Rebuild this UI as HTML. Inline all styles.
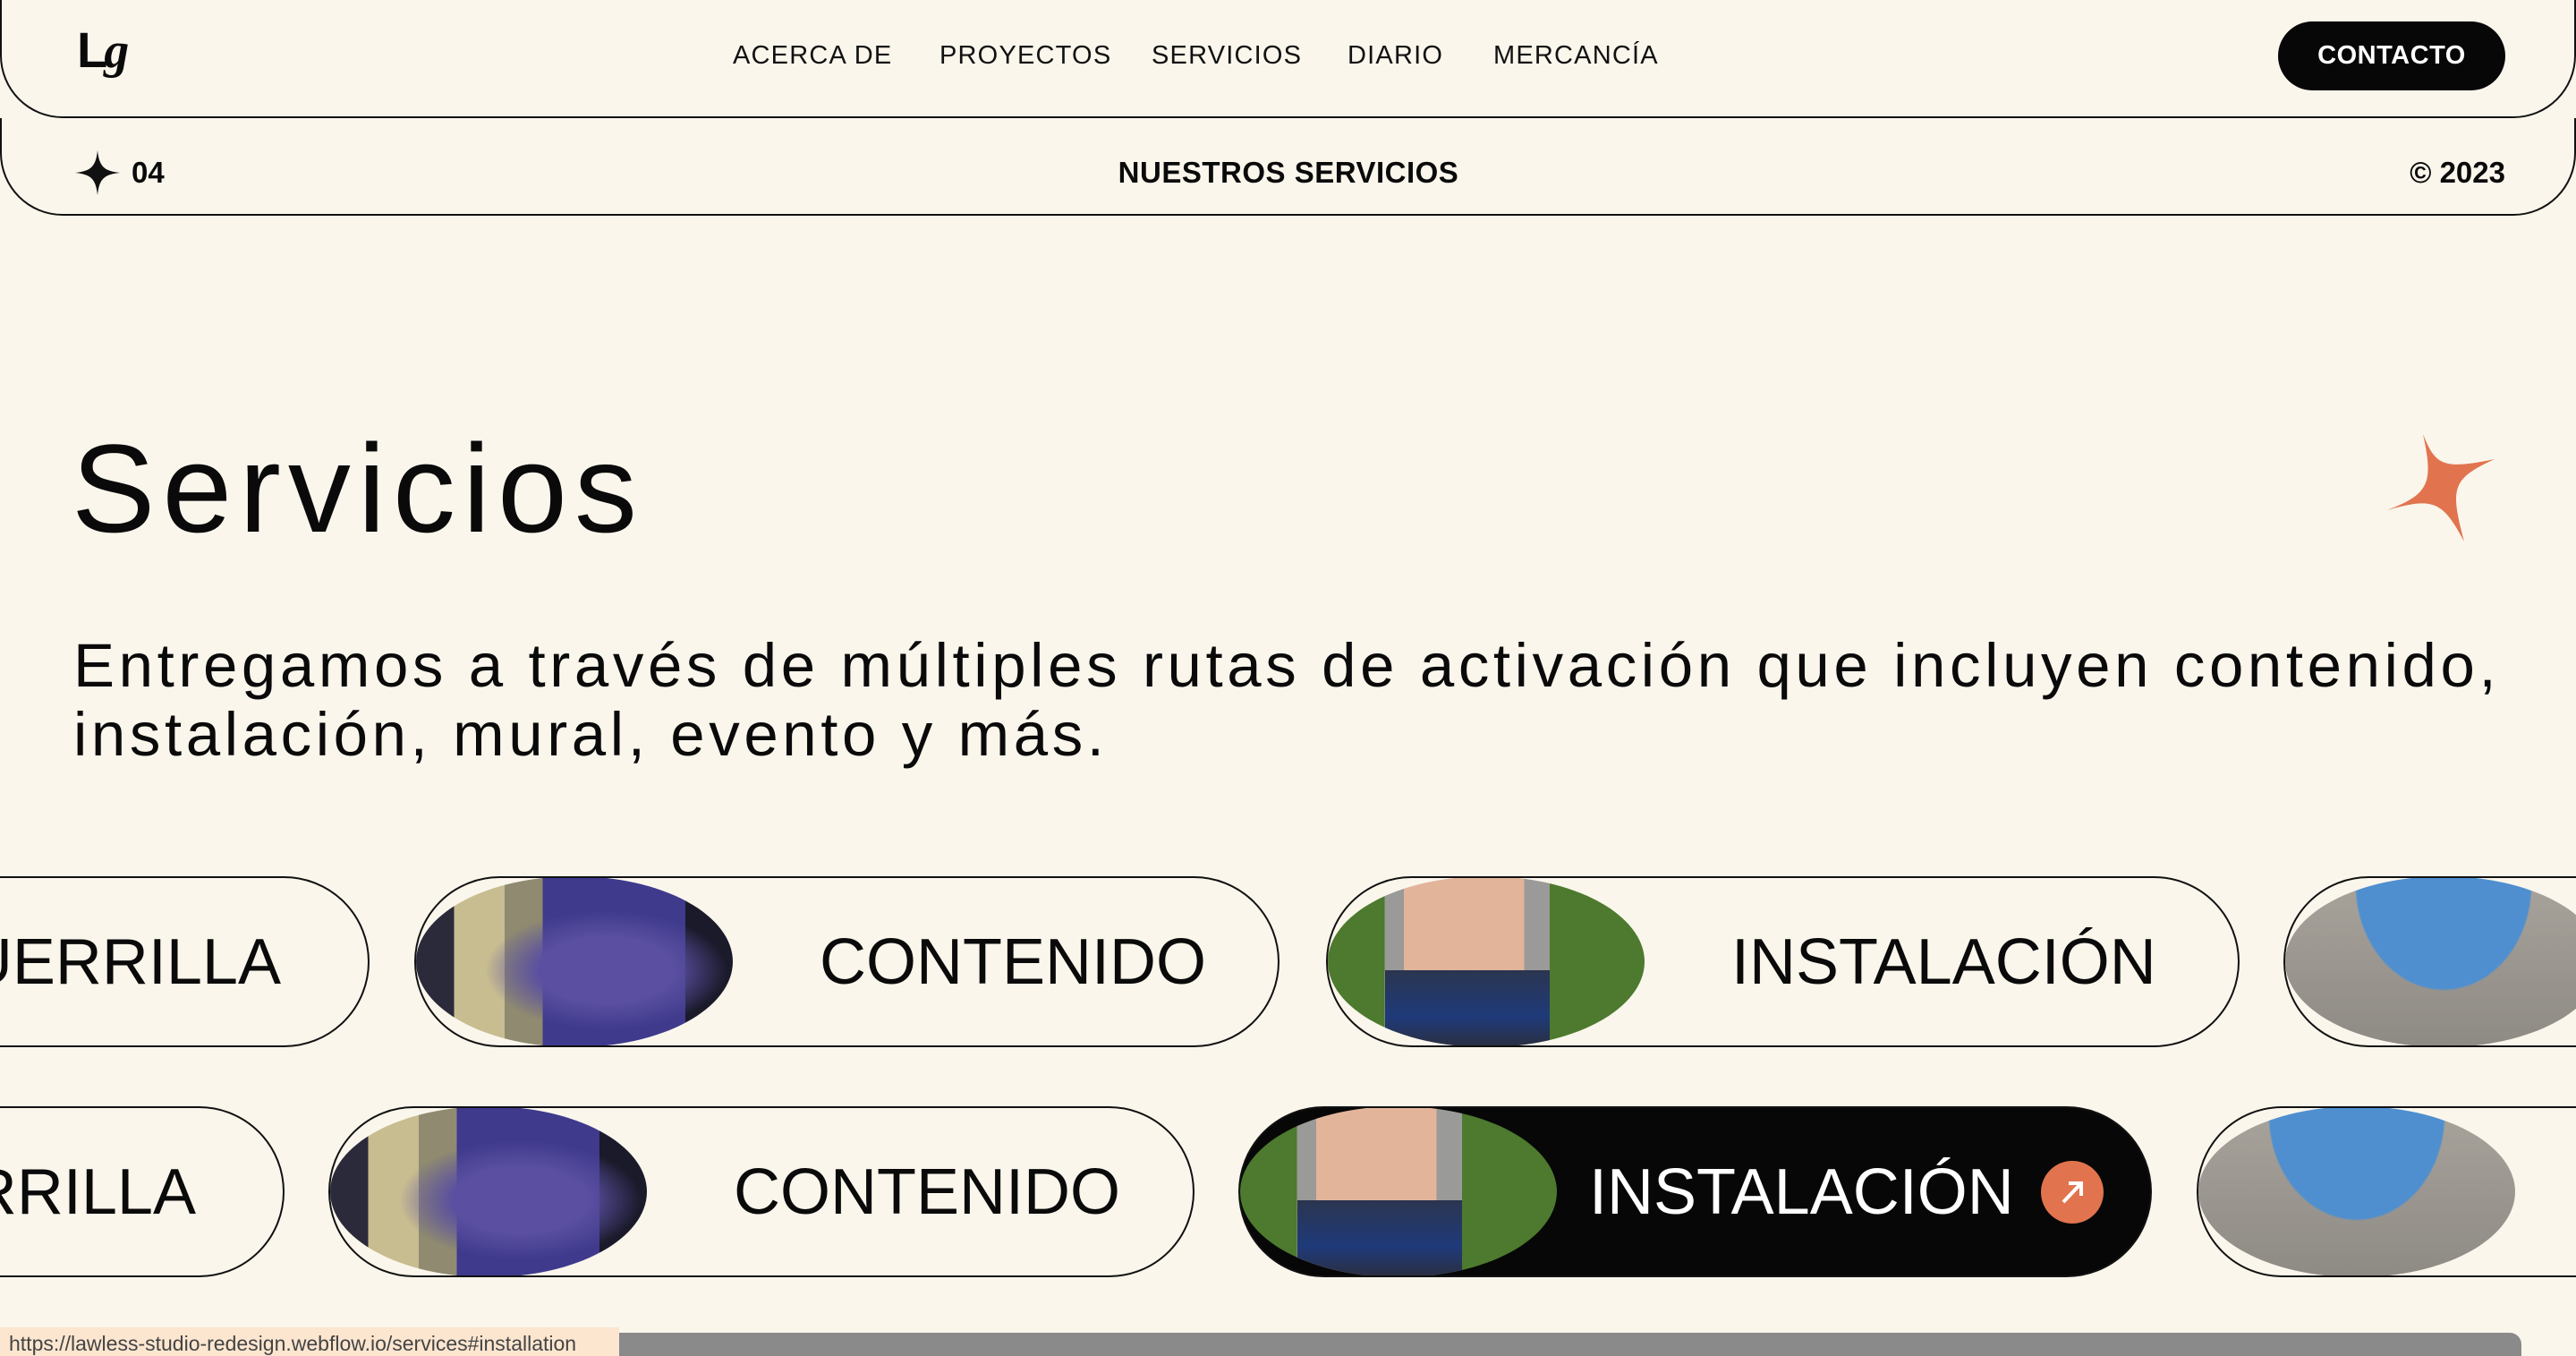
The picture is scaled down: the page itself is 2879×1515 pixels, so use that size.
<!DOCTYPE html>
<html><head><meta charset="utf-8">
<style>
*{margin:0;padding:0;box-sizing:border-box}
html,body{width:2879px;height:1515px;overflow:hidden;background:#faf6ec;font-family:"Liberation Sans",sans-serif;color:#0a0a0a}
.abs{position:absolute}
.bar{position:absolute;left:0;width:2879px;border:2px solid #111;border-top:none;border-radius:0 0 70px 70px}
.nav a{position:absolute;top:46px;font-size:29px;letter-spacing:1.2px;color:#111;text-decoration:none;white-space:nowrap}
.pill{position:absolute;height:191px;border:2px solid #111;border-radius:96px;display:flex;align-items:center;overflow:hidden;background:#faf6ec}
.pill .img{width:354px;height:191px;border-radius:50%;flex:none;overflow:hidden;position:relative}
.pill .t{font-size:72px;letter-spacing:0px;white-space:nowrap;padding:0 97px;line-height:1}
.cont{background:radial-gradient(ellipse at 60% 55%,#5a4fa0 0 25%,transparent 45%),linear-gradient(90deg,#2a2a3a 0 12%,#c8bd90 12% 28%,#8f8a70 28% 40%,#3f3a8c 40% 85%,#1a1a2a 85%)}
.inst{background:linear-gradient(90deg,#4d7a2e 0 18%,#9a9a98 18% 24%,#e2b49a 24% 62%,#9a9a98 62% 70%,#4d7a2e 70%)}
.inst:after{content:"";position:absolute;left:18%;right:30%;top:55%;bottom:0;background:linear-gradient(180deg,#2b3550,#1f3a7a 60%,#2a2f40)}
.frost{background:radial-gradient(ellipse 28% 62% at 50% 5%,#4f8fd0 0 98%,transparent 100%),linear-gradient(#a8a49c,#8e8a84)}
</style></head><body>

<div class="bar" style="top:-2px;height:134px"></div>
<div class="bar" style="top:132px;height:109px"></div>

<div class="abs" style="left:86px;top:28px;font-size:56px;font-weight:bold;line-height:1;letter-spacing:-4px">L<span style="font-family:'Liberation Serif',serif;font-style:italic">g</span></div>

<div class="nav">
<a style="left:819px">ACERCA DE</a>
<a style="left:1050px">PROYECTOS</a>
<a style="left:1287px">SERVICIOS</a>
<a style="left:1506px">DIARIO</a>
<a style="left:1669px">MERCANCÍA</a>
</div>

<div class="abs" style="left:2546px;top:24px;width:254px;height:77px;background:#070707;border-radius:39px;color:#fff;font-size:29px;font-weight:bold;display:flex;align-items:center;justify-content:center;letter-spacing:.5px">CONTACTO</div>

<svg class="abs" style="left:84px;top:168px" width="50" height="50" viewBox="0 0 50 50"><path d="M25 0 C27 18 32 23 50 25 C32 27 27 32 25 50 C23 32 18 27 0 25 C18 23 23 18 25 0Z" fill="#111"/></svg>
<div class="abs" style="left:147px;top:174px;font-size:33px;font-weight:bold">04</div>
<div class="abs" style="left:1140px;width:600px;text-align:center;top:174px;font-size:33px;font-weight:bold;letter-spacing:.5px">NUESTROS SERVICIOS</div>
<div class="abs" style="right:79px;top:174px;font-size:33px;font-weight:bold">© 2023</div>

<div class="abs" style="left:80px;top:476px;font-size:140px;line-height:1;letter-spacing:8px">Servicios</div>

<svg class="abs" style="left:2660px;top:480px" width="130" height="130" viewBox="0 0 130 130"><path d="M48 5 C62 40 70 45 128 33 C80 55 78 65 94 125 C70 80 60 75 8 90 C55 72 60 60 48 5Z" fill="#e1744e"/></svg>

<div class="abs" style="left:82px;top:705px;font-size:69px;line-height:77px;white-space:nowrap;letter-spacing:4.6px">Entregamos a través de múltiples rutas de activación que incluyen contenido,<br>instalación, mural, evento y más.</div>

<!-- row 1 -->
<div class="pill" style="left:-600px;top:979px;width:1013px;justify-content:flex-end"><div class="t">GUERRILLA</div></div>
<div class="pill" style="left:463px;top:979px;width:967px"><div class="img cont"></div><div class="t">CONTENIDO</div></div>
<div class="pill" style="left:1482px;top:979px;width:1021px"><div class="img inst"></div><div class="t">INSTALACIÓN</div></div>
<div class="pill" style="left:2552px;top:979px;width:900px"><div class="img frost"></div></div>

<!-- row 2 -->
<div class="pill" style="left:-695px;top:1236px;width:1013px;justify-content:flex-end"><div class="t">GUERRILLA</div></div>
<div class="pill" style="left:367px;top:1236px;width:968px"><div class="img cont"></div><div class="t">CONTENIDO</div></div>
<div class="pill" style="left:1384px;top:1236px;width:1021px;background:#070707;color:#fff"><div class="img inst"></div><div class="t" style="padding:0 30px 0 36px">INSTALACIÓN</div><div style="width:70px;height:70px;border-radius:50%;background:#e1744e;flex:none;position:relative"><svg width="70" height="70" viewBox="0 0 70 70"><path d="M25 46 L45 25 M31 25 H45 V39" stroke="#fff" stroke-width="4" fill="none"/></svg></div></div>
<div class="pill" style="left:2455px;top:1236px;width:900px"><div class="img frost"></div></div>

<div class="abs" style="left:0;top:1483px;width:692px;height:32px;background:#fce6d0;font-size:23px;color:#444;padding:5px 0 0 10px;white-space:nowrap">https://lawless-studio-redesign.webflow.io/services#installation</div>
<div class="abs" style="left:692px;top:1489px;width:2126px;height:26px;background:#8a8a8a;border-radius:0 13px 0 0"></div>
</body></html>
